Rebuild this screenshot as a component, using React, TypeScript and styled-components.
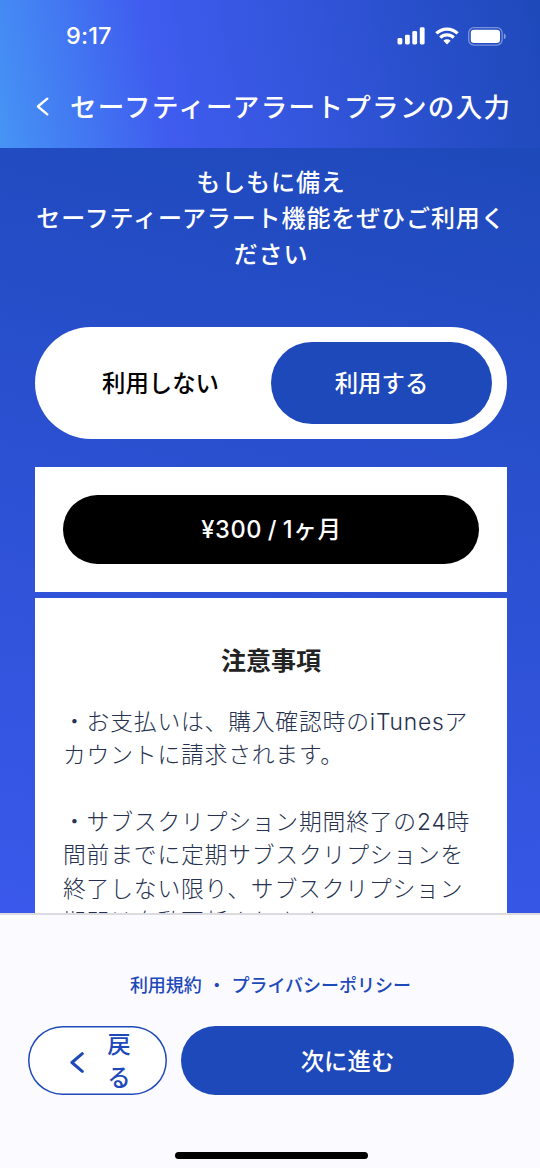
import React from "react";
import styled, { createGlobalStyle } from "styled-components";

const blue = "#1e49ba";

const GlobalStyle = createGlobalStyle`
  * { box-sizing: border-box; }
  body { margin: 0; background: #fafaff; }
  button { border: 0; margin: 0; padding: 0; font: inherit; letter-spacing: inherit; color: inherit; background: none; }
`;

const Screen = styled.div`
  display: flex;
  flex-direction: column;
  width: 540px;
  height: 1168px;
  overflow: hidden;
  font-family: Inter, "Noto Sans CJK JP", sans-serif;
  font-size: 23.4px;
  font-weight: 500;
  color: #fff;
`;

const Header = styled.header`
  flex: none;
  height: 148px;
  background: linear-gradient(79deg, #4694f5 0%, #3f5cef 30%, #1e49ba 100%);
`;

const StatusBar = styled.div`
  display: flex;
  align-items: center;
  justify-content: space-between;
  height: 72px;
  padding: 0 34px 0 66px;
`;

const Clock = styled.span`
  margin-bottom: 2px;
  font-size: 23.5px;
  font-weight: 550;
  letter-spacing: 0.1px;
`;

const StatusIcons = styled.div`
  display: flex;
  align-items: center;
  gap: 9.5px;
`;

const TitleBar = styled.div`
  display: flex;
  align-items: center;
  height: 68px;
  padding-left: 36px;
`;

const Title = styled.h1`
  margin: 2px 0 0 21px;
  font-size: 26.5px;
  font-weight: 500;
  line-height: 40px;
  letter-spacing: 1.35px;
  white-space: nowrap;
`;

const Content = styled.main`
  flex: none;
  display: flex;
  flex-direction: column;
  height: 765px;
  padding: 17px 33px 0 35px;
  overflow: hidden;
  background: linear-gradient(13deg, #3a59ec 0%, #1e49ba 100%);
`;

const Lead = styled.p`
  margin: 0 -10px;
  text-align: center;
  font-size: 24px;
  line-height: 36px;
  letter-spacing: 0.9px;
`;

const Toggle = styled.div`
  flex: none;
  display: flex;
  height: 112px;
  margin-top: 54px;
  padding: 15px;
  border-radius: 56px;
  background: #fff;
`;

const ToggleOption = styled.button<{ $active?: boolean }>`
  flex: 1;
  padding-bottom: 2px;
  border-radius: 41px;
  color: ${(p) => (p.$active ? "#fff" : "#000")};
  background: ${(p) => (p.$active ? blue : "transparent")};
`;

const PriceCard = styled.section`
  flex: none;
  height: 125px;
  margin-top: 28px;
  padding: 28px;
  background: #fff;
`;

const PriceButton = styled.button`
  width: 100%;
  height: 69px;
  padding: 0 0 3px 1px;
  border-radius: 35px;
  font-size: 23.6px;
  letter-spacing: 0.6px;
  word-spacing: -1.2px;
  background: #000;
  color: #fff;
`;

const Notes = styled.section`
  flex: none;
  height: 400px;
  margin-top: 6px;
  padding: 43px 28px 0;
  background: #fff;
`;

const NotesTitle = styled.h2`
  margin: 0 0 24px;
  text-align: center;
  font-size: 25px;
  line-height: 40px;
  font-weight: 600;
  color: #222;
`;

const Note = styled.p`
  margin: 0 0 33.35px;
  font-size: 22.8px;
  line-height: 33.35px;
  letter-spacing: 0.8px;
  font-weight: 300;
  color: #26314f;
  white-space: nowrap;
`;

const Footer = styled.footer`
  flex: 1;
  display: flex;
  flex-direction: column;
  border-top: 2px solid #dcdce0;
  background: #fafaff;
  color: ${blue};
`;

const Links = styled.nav`
  margin-top: 57px;
  padding-left: 1px;
  text-align: center;
  font-size: 18px;
  line-height: 28px;
  word-spacing: 1px;
  white-space: pre;
`;

const Actions = styled.div`
  display: flex;
  gap: 14px;
  height: 69px;
  margin: 26px 26px 0 28px;
`;

const BackButton = styled.button`
  display: flex;
  align-items: center;
  width: 139px;
  padding-left: 42px;
  box-shadow: inset 0 0 0 1.5px ${blue};
  border-radius: 35px;
  background: #fff;

  svg {
    margin-top: 3px;
  }
`;

const BackLabel = styled.span`
  width: 24px;
  margin-left: 23px;
  line-height: 33px;
  text-align: center;
`;

const NextButton = styled.button`
  flex: 1;
  padding-bottom: 2px;
  border-radius: 35px;
  background: ${blue};
  color: #fff;
`;

const HomeIndicator = styled.div`
  width: 193px;
  height: 7px;
  margin: 57px auto 0 175px;
  border-radius: 4px;
  background: #000;
`;

const Chevron = ({ width, height, stroke }: { width: number; height: number; stroke: number }) => (
  <svg width={width} height={height} viewBox={`0 0 ${width} ${height}`} fill="none">
    <path
      d={`M${width - 1.7} 1.7L1.9 ${height / 2}L${width - 1.7} ${height - 1.7}`}
      stroke="currentColor"
      strokeWidth={stroke}
      strokeLinecap="round"
      strokeLinejoin="round"
    />
  </svg>
);

const Signal = () => (
  <svg width="28" height="18" viewBox="0 0 28 18" fill="#fff">
    <rect x="0.5" y="11" width="4.8" height="6.5" rx="1.4" />
    <rect x="8" y="7.7" width="4.8" height="9.8" rx="1.4" />
    <rect x="15.3" y="4" width="4.8" height="13.5" rx="1.4" />
    <rect x="22.8" y="0.3" width="4.8" height="17.2" rx="1.4" />
  </svg>
);

const Wifi = () => (
  <svg width="24" height="18" viewBox="0 0 24 18" fill="none" stroke="#fff" strokeWidth="3.2">
    <path d="M1.4 6.4A15.2 15.2 0 0 1 22.6 6.4" />
    <path d="M5.3 10.6A9.6 9.6 0 0 1 18.7 10.6" />
    <path d="M8.4 13.7A5.2 5.2 0 0 1 15.6 13.7L12 17.4Z" fill="#fff" stroke="none" />
  </svg>
);

const Battery = () => (
  <svg width="38" height="19" viewBox="0 0 38 19" fill="none">
    <rect x="0.7" y="0.7" width="33.4" height="17.4" rx="5.2" stroke="#fff" strokeOpacity="0.4" strokeWidth="1.3" />
    <rect x="2.8" y="2.8" width="29.2" height="13.2" rx="3.3" fill="#fff" />
    <path d="M35.9 6.6C38.4 7.4 38.4 11.4 35.9 12.2Z" fill="#fff" fillOpacity="0.45" />
  </svg>
);

export default function App() {
  return (
    <Screen>
      <GlobalStyle />
      <Header>
        <StatusBar>
          <Clock>9:17</Clock>
          <StatusIcons>
            <Signal />
            <Wifi />
            <Battery />
          </StatusIcons>
        </StatusBar>
        <TitleBar>
          <Chevron width={13} height={19} stroke={2.4} />
          <Title>セーフティーアラートプランの入力</Title>
        </TitleBar>
      </Header>
      <Content>
        <Lead>
          もしもに備え
          <br />
          セーフティーアラート機能をぜひご利用く
          <br />
          ださい
        </Lead>
        <Toggle>
          <ToggleOption>利用しない</ToggleOption>
          <ToggleOption $active>利用する</ToggleOption>
        </Toggle>
        <PriceCard>
          <PriceButton>¥300 / 1ヶ月</PriceButton>
        </PriceCard>
        <Notes>
          <NotesTitle>注意事項</NotesTitle>
          <Note>
            ・お支払いは、購入確認時のiTunesア
            <br />
            カウントに請求されます。
          </Note>
          <Note>
            ・サブスクリプション期間終了の24時
            <br />
            間前までに定期サブスクリプションを
            <br />
            終了しない限り、サブスクリプション
            <br />
            期間は自動更新されます。
          </Note>
        </Notes>
      </Content>
      <Footer>
        <Links>利用規約 ・ プライバシーポリシー</Links>
        <Actions>
          <BackButton>
            <Chevron width={14} height={21} stroke={3} />
            <BackLabel>戻る</BackLabel>
          </BackButton>
          <NextButton>次に進む</NextButton>
        </Actions>
        <HomeIndicator />
      </Footer>
    </Screen>
  );
}
